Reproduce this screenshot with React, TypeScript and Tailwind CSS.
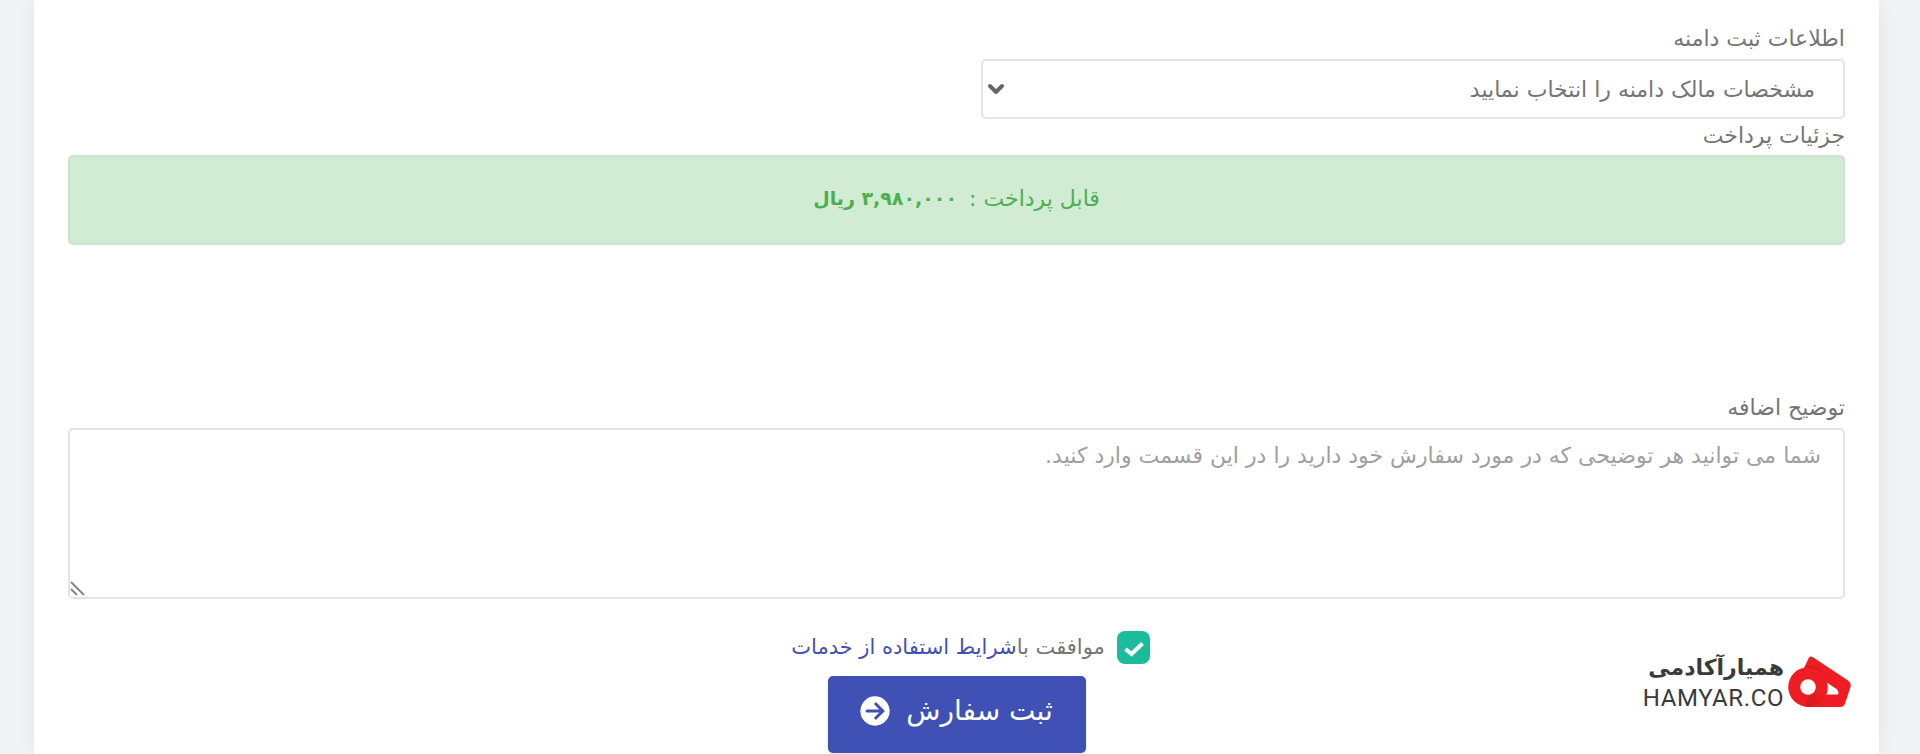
import { ChevronDown } from 'lucide-react';

function HamyarMark() {
  return (
    <svg viewBox="0 0 63 52" className="h-[52px] w-[63px] shrink-0" aria-hidden="true">
      <defs>
        <linearGradient id="bodyShade" x1="0.2" y1="0.3" x2="0.85" y2="0.1">
          <stop offset="0" stopColor="#c8161b" />
          <stop offset="0.5" stopColor="#d9191f" />
          <stop offset="1" stopColor="#ee1d24" />
        </linearGradient>
        <linearGradient id="tailShade" x1="0" y1="0.8" x2="0.8" y2="0.2">
          <stop offset="0" stopColor="#d4181e" />
          <stop offset="1" stopColor="#ee1d24" />
        </linearGradient>
      </defs>
      <path
        d="M20.500 2.500Q21.500-.8 25 1.200L60 24.500Q63.500 27 62.500 31L57 47.500Q55.800 51 52 51L20 51L16 12Z"
        fill="#ee1d24"
      />
      <path d="M18 10Q34 9 42 26L38.500 32Z" fill="url(#bodyShade)" />
      <path d="M39 26.500L48.500 33Q51.500 36 50 38.500L37 38.500Z" fill="#fff" />
      <circle cx="20" cy="31" r="19.800" fill="#ee1d24" />
      <path d="M17 50.600Q17.500 44 23 38L39 36Q34 50.800 20 50.800Z" fill="url(#tailShade)" />
      <circle cx="20" cy="31" r="7.800" fill="#fff" />
    </svg>
  );
}

export default function App() {
  return (
    <div
      dir="rtl"
      className="relative min-h-screen overflow-hidden bg-[#f2f3f5] pr-[41px] pl-[34px] font-['DejaVu_Sans',sans-serif] text-[#757575]"
    >
      <main className="min-h-screen bg-white px-[34px] pt-5 shadow-[0_0_20px_rgba(0,0,0,0.07)]">
        {/* Domain owner */}
        <label htmlFor="owner" className="block h-[39px] text-[22px] leading-[38px]">
          اطلاعات ثبت دامنه
        </label>
        <div className="grid grid-cols-2 gap-12">
          <div className="relative">
            <select
              id="owner"
              className="h-[60px] w-full appearance-none rounded-[5px] border-2 border-[#e4e4e4] bg-white px-7 text-[22px] text-[#757575]"
            >
              <option>مشخصات مالک دامنه را انتخاب نمایید</option>
            </select>
            <ChevronDown
              size={24}
              strokeWidth={4}
              className="pointer-events-none absolute top-[18px] left-[3px] text-[#666]"
            />
          </div>
        </div>

        {/* Payment */}
        <h2 className="h-9 text-[22px] leading-[34px]">جزئیات پرداخت</h2>
        <div className="flex h-[90px] items-center justify-center gap-3 rounded-[5px] border-2 border-[#cae5cb] bg-[#d2ebd3] pb-1 text-[22px] text-[#4caf50]">
          <span>قابل پرداخت :</span>
          <strong className="text-[19px]">۳,۹۸۰,۰۰۰ ریال</strong>
        </div>

        {/* Notes */}
        <label htmlFor="notes" className="mt-36 block h-[39px] text-[22px] leading-[38px]">
          توضیح اضافه
        </label>
        <div className="relative">
          <textarea
            id="notes"
            className="block h-[171px] w-full resize rounded-[5px] border-2 border-[#e4e4e4] px-[22px] py-2 text-[22px] leading-9 placeholder:text-[#a0a0a0]"
            placeholder="شما می توانید هر توضیحی که در مورد سفارش خود دارید را در این قسمت وارد کنید."
          />
          <svg
            viewBox="0 0 16 16"
            className="pointer-events-none absolute bottom-[2px] left-[2px] size-4 bg-white"
            aria-hidden="true"
          >
            <path d="M1 1L14 14M1 8L7 14" stroke="#858585" strokeWidth="1.800" />
          </svg>
        </div>

        {/* Terms and submit */}
        <div className="mt-8 flex flex-col items-center gap-3">
          <div className="flex h-[33px] items-center gap-3 pl-7 text-[21px]">
            <span className="relative block size-[33px]">
              <input
                id="terms"
                type="checkbox"
                defaultChecked
                className="block size-[33px] appearance-none rounded-[8px] bg-[#1abc9c]"
              />
              <svg viewBox="0 0 33 33" className="pointer-events-none absolute inset-0" aria-hidden="true">
                <path
                  d="M8.500 18L14.500 23L25.500 12.500"
                  fill="none"
                  stroke="#fff"
                  strokeWidth="4"
                />
              </svg>
            </span>
            <p>
              <label htmlFor="terms">موافقت با</label>
              <a href="#terms" className="text-[#3f51b5]">شرایط استفاده از خدمات</a>
            </p>
          </div>
          <button
            type="button"
            className="flex h-[77px] w-[258px] items-center justify-center gap-4 rounded-[5px] bg-[#3f51b5] pb-2 text-[28px] font-medium text-white shadow-sm"
          >
            ثبت سفارش
            <svg viewBox="0 0 512 512" className="size-[30px]" aria-hidden="true">
              <circle cx="256" cy="256" r="250" fill="#fff" />
              <path
                d="M120 256H390M270 136L390 256L270 376"
                fill="none"
                stroke="#3f51b5"
                strokeWidth="52"
                strokeLinecap="round"
              />
            </svg>
          </button>
        </div>
      </main>

      {/* Brand badge in the corner */}
      <div className="absolute right-[69px] bottom-[42px] flex items-center gap-1 text-[#3a3a3a]">
        <HamyarMark />
        <div className="flex flex-col">
          <span className="text-[22px] leading-8 font-bold">همیارآکادمی</span>
          <span dir="ltr" className="font-[Roboto,sans-serif] text-2xl leading-7 tracking-wide">
            HAMYAR.CO
          </span>
        </div>
      </div>
    </div>
  );
}
